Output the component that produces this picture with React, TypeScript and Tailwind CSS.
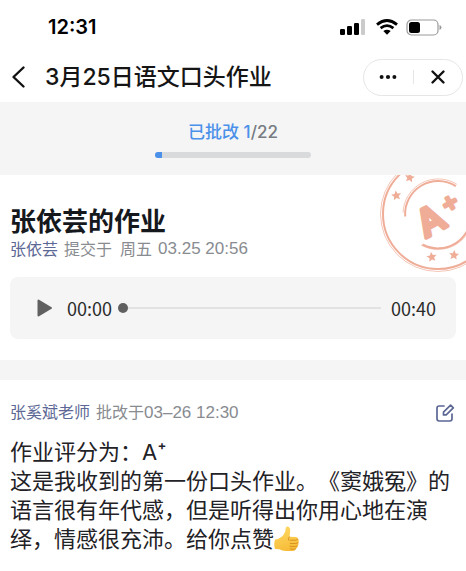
import { useState } from "react";

const STAR = "M0 -5 L1.5 -1.7 L5 -1.5 L2.3 .9 L3.1 4.3 L0 2.5 L-3.1 4.3 L-2.3 .9 L-5 -1.5 L-1.5 -1.7 Z";

function StatusBar() {
  return (
    <div className="flex h-[52px] items-center justify-between pl-12 pr-6 pt-0.5">
      <time className="font-['Inter'] text-xl font-semibold text-black">12:31</time>
      <div className="flex items-center gap-2">
        <svg className="mr-0.5" width="26" height="16" viewBox="0 0 26 16" aria-label="信号">
          <rect x="0" y="10" width="5" height="6" rx="1.2" />
          <rect x="7" y="7" width="5" height="9" rx="1.2" />
          <rect x="14" y="4" width="5" height="12" rx="1.2" />
          <rect x="21" y="0" width="4" height="16" rx="1.2" fill="#cbcbcb" />
        </svg>
        <svg width="22" height="16" viewBox="0 0 22 16" aria-label="无线网络">
          <g fill="none" stroke="#000" strokeWidth="2.8">
            <path d="M1 5.6Q11 -2.6 21 5.6" />
            <path d="M4.6 9.2Q11 4 17.4 9.2" />
          </g>
          <path d="M7.3 12.1Q11 9.3 14.7 12.1L11 15.8Z" />
        </svg>
        <svg width="36" height="17" viewBox="0 0 36 17" aria-label="电量">
          <rect x="1" y="1" width="31" height="15" rx="4.5" fill="none" stroke="#999" strokeWidth="1.2" />
          <rect x="3" y="3" width="11" height="11" rx="2.5" />
          <path d="M33.5 6Q35.5 6.6 35.5 8.5T33.5 11Z" fill="#999" />
        </svg>
      </div>
    </div>
  );
}

function NavBar() {
  return (
    <header className="flex h-[50px] items-center pl-2 pr-[3px]">
      <button type="button" aria-label="返回" className="flex h-8 w-[37px] items-center">
        <svg width="20" height="26" viewBox="0 0 20 26" fill="none" stroke="#111" strokeWidth="2.4" strokeLinecap="round" strokeLinejoin="round">
          <path d="M15.5 3.5L5.5 13L15.5 22.5" />
        </svg>
      </button>
      <h1 className="flex-1 text-[23px] font-medium text-[#151515]">3月25日语文口头作业</h1>
      <div className="flex h-[37px] w-[100px] items-center rounded-full border border-[#e6e6e6] bg-white">
        <button type="button" aria-label="更多" className="flex h-full flex-1 items-center justify-center">
          <svg width="18" height="6" viewBox="0 0 18 6" fill="#111">
            <circle cx="2.6" cy="3" r="2" />
            <circle cx="9" cy="3" r="2.1" />
            <circle cx="15.4" cy="3" r="2" />
          </svg>
        </button>
        <span className="h-3.5 w-px bg-[#e6e6e6]" />
        <button type="button" aria-label="关闭" className="flex h-full flex-1 items-center justify-center">
          <svg width="16" height="16" viewBox="0 0 16 16" stroke="#111" strokeWidth="2.4" strokeLinecap="round">
            <path d="M2.5 2.5L13.5 13.5M13.5 2.5L2.5 13.5" />
          </svg>
        </button>
      </div>
    </header>
  );
}

function Stamp() {
  return (
    <svg className="absolute right-0 top-0" width="86" height="98" viewBox="0 0 86 98" aria-label="评分 A+">
      <g fill="none" stroke="#efad98">
        <circle cx="58" cy="39" r="57.5" strokeWidth=".7" />
        <circle cx="58" cy="39" r="55" strokeWidth="2" />
        <path d="M23 37.5A35.2 35.2 0 0 1 77 9.4" strokeWidth=".7" />
        <path d="M25.2 41.5A33 33 0 0 1 75.8 11.2" strokeWidth="2" />
        <path d="M42.5 69.5A33 33 0 0 0 91 39" strokeWidth="2" />
        <path d="M41 70A35.2 35.2 0 0 0 93.2 39" strokeWidth=".7" />
      </g>
      <g fill="#efad98">
        <path d={STAR} transform="translate(29.7 2.5) rotate(8)" />
        <path d={STAR} transform="translate(16.3 20.5) rotate(-8)" />
        <path d={STAR} transform="translate(51.7 82) rotate(-8)" />
        <path d={STAR} transform="translate(74 80) rotate(6)" />
      </g>
      <g fill="#efad98" stroke="#efad98" strokeLinejoin="round" className="font-['Inter']">
        <text className="font-medium" transform="translate(57 57) rotate(-29)" textAnchor="middle" fontSize="37" strokeWidth="4">A</text>
        <text className="font-medium" transform="translate(73.5 34.5) rotate(-29)" textAnchor="middle" fontSize="26" strokeWidth="3">+</text>
      </g>
    </svg>
  );
}

function ThumbsUp() {
  return (
    <svg className="inline-block align-[-5px]" width="26" height="26" viewBox="0 0 26 26" role="img" aria-label="赞">
      <defs>
        <linearGradient id="skin" x1="0" y1="0" x2="0.3" y2="1">
          <stop offset="0" stopColor="#ffdc66" />
          <stop offset="1" stopColor="#f7bd3a" />
        </linearGradient>
      </defs>
      <path d="M1 13.5Q5 13 8 10.5Q11.5 7 11.6 2.5Q11.8 .4 13.8 .6Q16.2 1 16.2 4.5Q16.1 7.8 15.3 10.8L22 11Q24.4 11.4 24 13.4Q25.6 14.6 24.2 16.6Q25.2 18.4 23.5 19.8Q24 22 21.8 22.8Q21.5 25 18.6 25H12Q7.5 24.8 5.5 23.3L1 23Q-.5 18 1 13.5Z" fill="url(#skin)" />
      <path d="M24 13.6Q22.8 14.6 16.3 14.2M24.1 16.8Q22.5 18 16.2 17.4M23.4 20Q21.5 21 16.1 20.3M21.7 22.9Q19.5 23.6 16.3 23M15.3 10.8Q14 12.6 14.6 14.2" fill="none" stroke="#d48b1b" strokeWidth=".9" strokeLinecap="round" />
    </svg>
  );
}

function Player() {
  const [position, setPosition] = useState(0);
  return (
    <div className="mt-4 flex h-[62px] items-center rounded-lg bg-[#f5f5f5] pl-[27px] pr-5">
      <button type="button" aria-label="播放" className="mr-[14px]">
        <svg width="16" height="18" viewBox="0 0 16 18" fill="#606060" stroke="#606060" strokeWidth="2" strokeLinejoin="round">
          <path d="M1.5 1.5V16.5L14 9Z" />
        </svg>
      </button>
      <span className="font-['Noto_Sans_CJK_SC',sans-serif] text-lg leading-6 text-[#2b2b2b]">00:00</span>
      <input
        type="range"
        min={0}
        max={40}
        value={position}
        onChange={(e) => setPosition(Number(e.target.value))}
        aria-label="播放进度"
        className="mx-1.5 h-[10px] min-w-0 flex-1 appearance-none bg-transparent bg-[linear-gradient(#e2e2e2,#e2e2e2)] bg-[length:100%_2px] bg-center bg-no-repeat [&::-webkit-slider-thumb]:size-[10px] [&::-webkit-slider-thumb]:appearance-none [&::-webkit-slider-thumb]:rounded-full [&::-webkit-slider-thumb]:bg-[#606060]"
      />
      <span className="ml-1 font-['Noto_Sans_CJK_SC',sans-serif] text-lg leading-6 text-[#2b2b2b]">00:40</span>
    </div>
  );
}

export default function App() {
  return (
    <div className="min-h-screen bg-white font-['Inter','Noto_Sans_CJK_SC',sans-serif]" lang="zh-CN">
      <StatusBar />
      <NavBar />
      <section className="flex h-[73px] flex-col items-center bg-[#f5f5f5] pt-[18px]">
        <p className="text-[17px] leading-6 font-medium text-[#777b82]">
          <span className="text-[#4b91ea]">已批改 1</span>/22
        </p>
        <div role="progressbar" aria-label="批改进度" aria-valuenow={1} aria-valuemax={22} className="mt-2 h-[6px] w-1/3 overflow-hidden rounded-full bg-[#d9dadc]">
          <div className="h-full bg-[#4b91ea]" style={{ width: `${100 / 22}%` }} />
        </div>
      </section>
      <section className="relative overflow-hidden px-[10px] pt-8 pb-[21px]">
        <Stamp />
        <h2 className="text-[26px] leading-[30px] font-bold text-[#15181c]">张依芸的作业</h2>
        <p className="flex gap-1.5 text-base leading-6 text-[#888b90]">
          <a href="#student" className="text-[#5b6794]">张依芸</a>
          <span>提交于</span>
          <span className="ml-0.5">周五</span>
          <span className="font-['Liberation_Sans'] text-[17px]">03.25 20:56</span>
        </p>
        <Player />
      </section>
      <div className="h-5 bg-[#f5f5f5]" />
      <section className="px-[10px] pt-5">
        <div className="flex items-center justify-between">
          <p className="text-base leading-6 text-[#888b90]">
            <a href="#teacher" className="mr-1.5 text-[#5b6794]">张奚斌老师</a>
            批改于<span className="font-['Liberation_Sans'] text-[17px]">03–26 12:30</span>
          </p>
          <button type="button" aria-label="编辑" className="mr-px">
            <svg width="20" height="20" viewBox="0 0 20 20" fill="none" stroke="#5b6794" strokeWidth="1.7" strokeLinecap="round" strokeLinejoin="round">
              <path d="M9 3H4.2Q2 3 2 5.2V15.8Q2 18 4.2 18H14.8Q17 18 17 15.8V11" />
              <path d="M8.5 9.2L15.6 2.1L18.3 4.8L11.2 11.9H8.5Z" />
            </svg>
          </button>
        </div>
        <div className="mt-[13px] text-[22px] leading-[29px] text-[#1f2226] [text-spacing-trim:space-all]">
          <p>作业评分为：A⁺</p>
          <p>
            这是我收到的第一份口头作业。《窦娥冤》的语言很有年代感，但是听得出你用心地在演绎，情感很充沛。给你点赞
            <ThumbsUp />
          </p>
        </div>
      </section>
    </div>
  );
}
